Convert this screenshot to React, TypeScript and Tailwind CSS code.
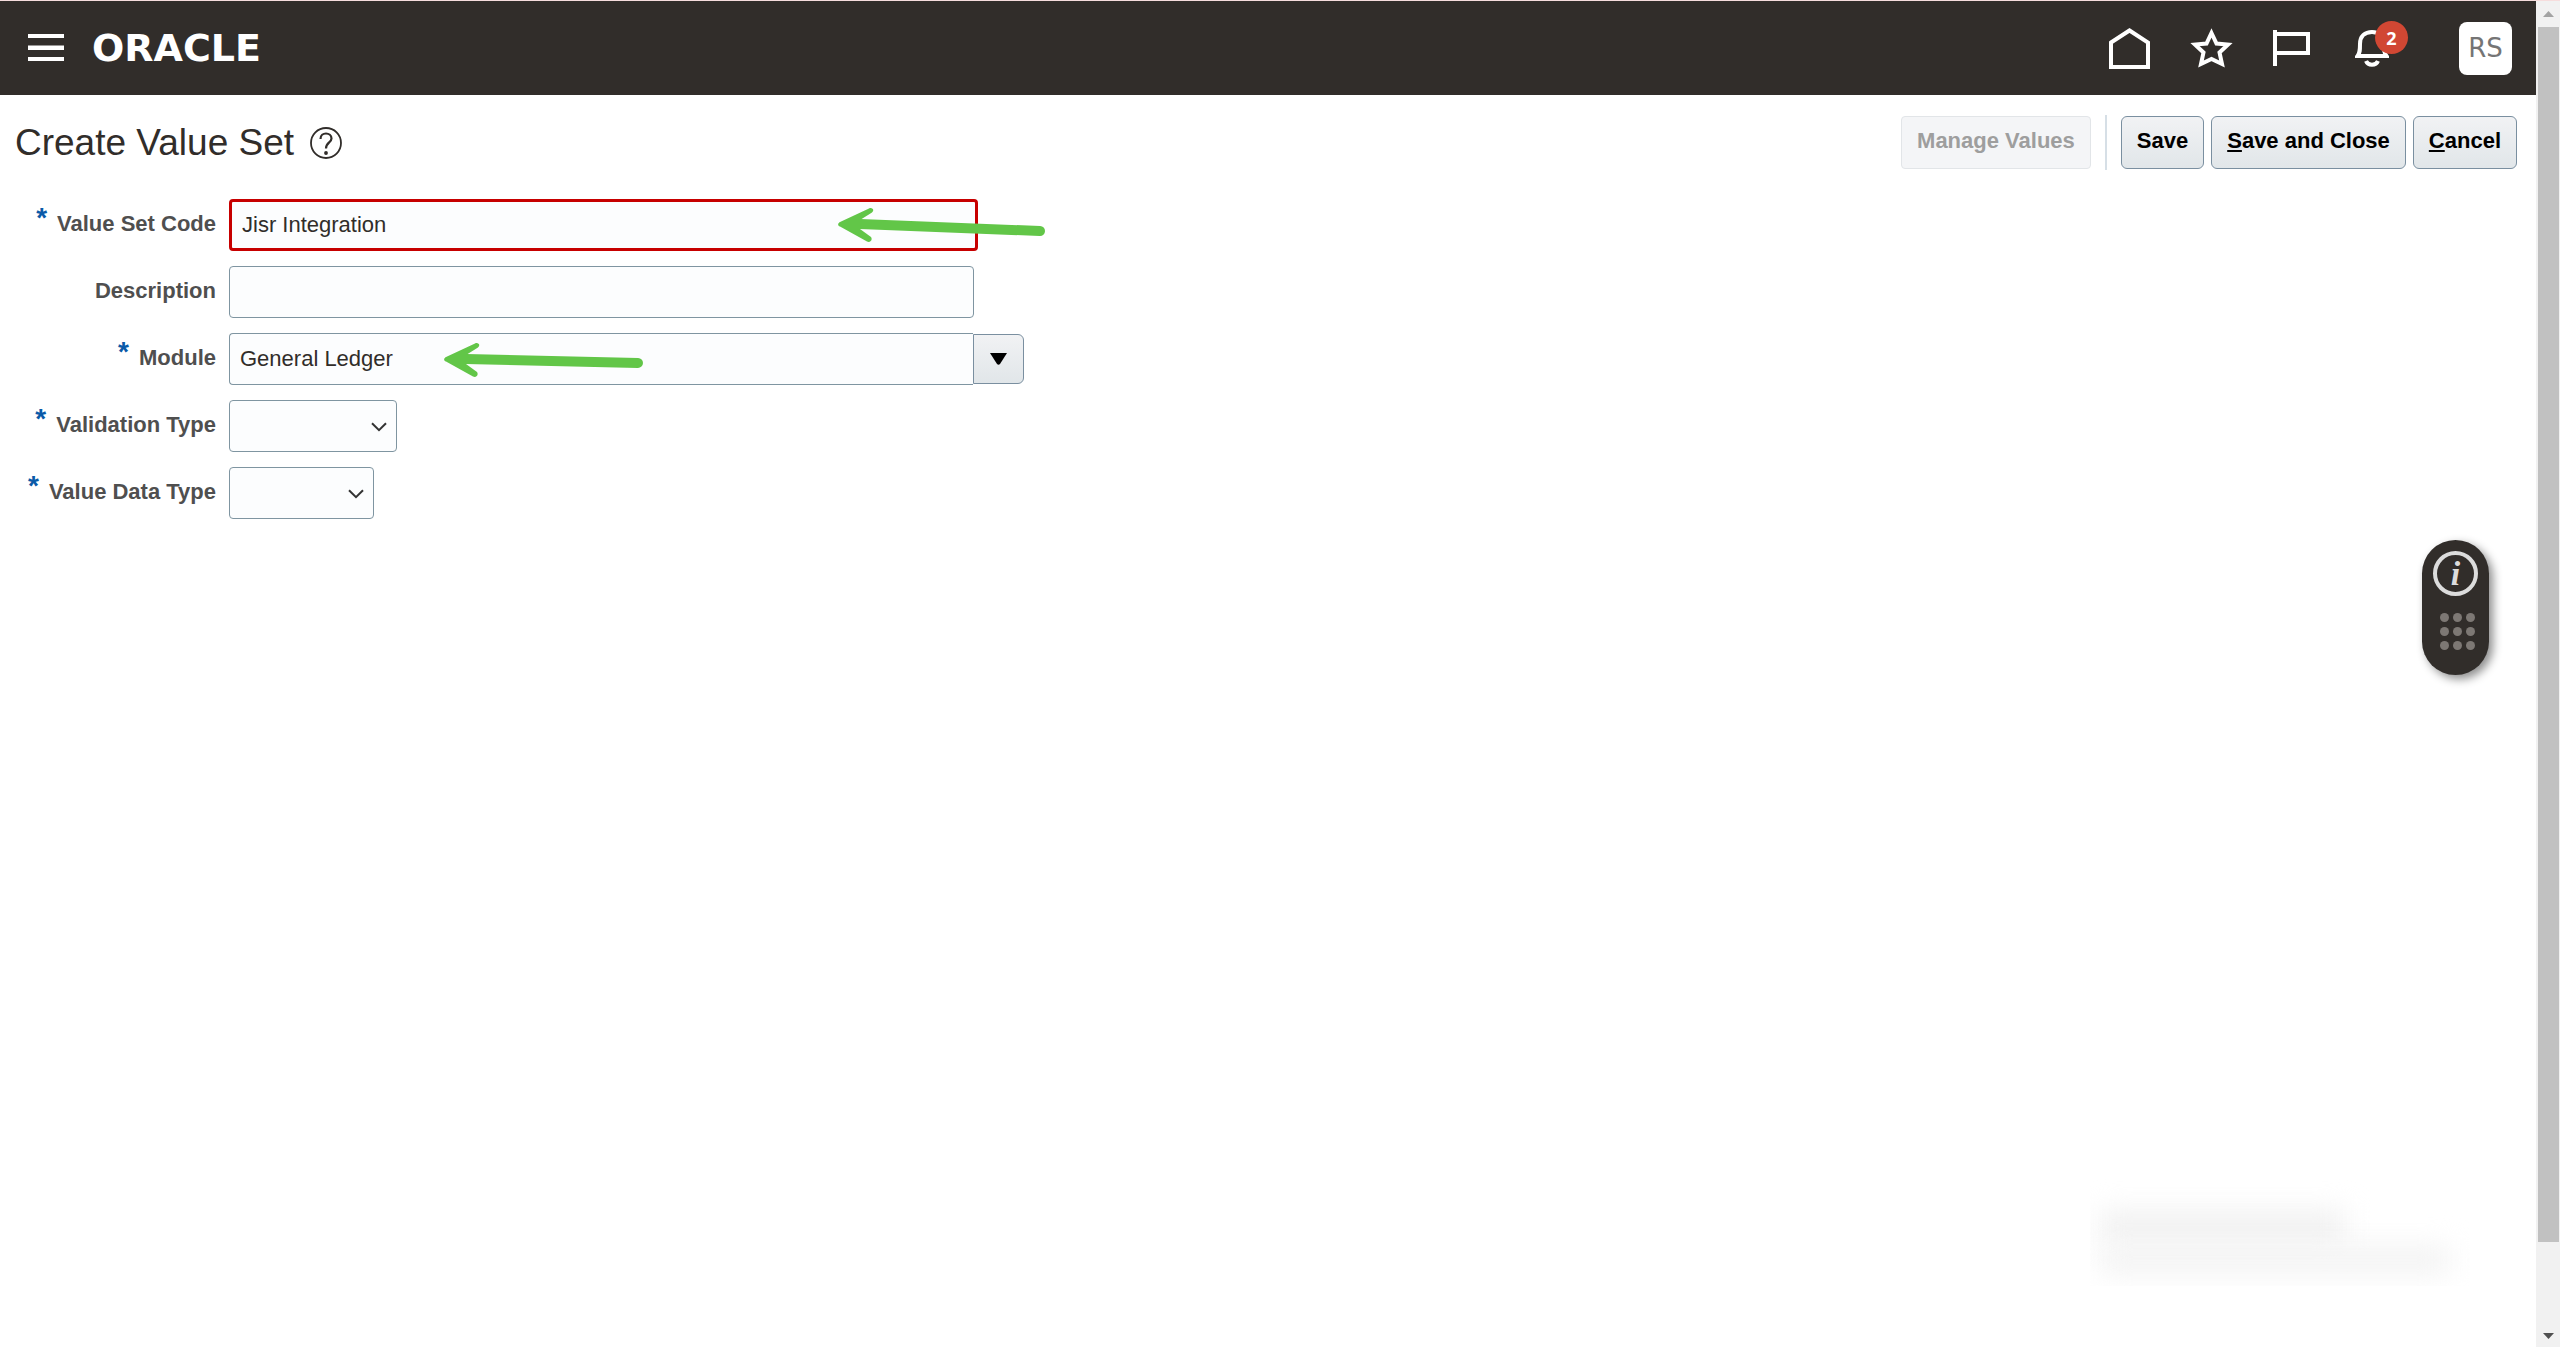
import React, { useState } from 'react';

const toolButton =
    'flex h-[53px] items-center rounded-md border border-[#7a8fa0] bg-gradient-to-b from-[#f1f2f4] to-[#e1e6e9] px-[15px] pb-1 text-[22px] font-bold text-black';

const Logo = () => (
    <a href="#" className="font-['DejaVu_Sans'] text-[38px] leading-none font-bold text-white">
        ORACLE
    </a>
);

const RequiredLabel: React.FC<{ htmlFor: string; required?: boolean; children: React.ReactNode }> = ({ htmlFor, required, children }) => (
    <label htmlFor={htmlFor} className="flex items-start justify-end gap-2.5 pb-1 font-bold text-[#4f4f4f]">
        {required && <span className="text-[28px] leading-[22px] text-[#0a5aa8]">*</span>}
        {children}
    </label>
);

const SelectBox: React.FC<{ id: string; className: string }> = ({ id, className }) => (
    <div className={`relative ${className}`}>
        <select id={id} className="block h-[52px] w-full appearance-none rounded border border-[#7f95a1] bg-[#fcfdfe] px-2.5 outline-none">
            <option value=""></option>
        </select>
        <svg className="pointer-events-none absolute top-[22px] right-2.5" width="16" height="10" viewBox="0 0 16 10" fill="none" stroke="#333" strokeWidth="2">
            <path d="M1 1.2l7 7 7-7" />
        </svg>
    </div>
);

// hand-drawn marker arrow laid over a field
const Arrow: React.FC<{ className: string; drop: number; length: number }> = ({ className, drop, length }) => (
    <svg className={`pointer-events-none absolute ${className}`} width={length} height="40" viewBox={`0 0 ${length} 40`} fill="none">
        <path d={`M22 18L${length - 5} ${19 + drop}`} stroke="#62c648" strokeWidth="10" strokeLinecap="round" />
        <path
            d="M2 16L31 2.500C34 1 37 4 34 6.500L22 14L22 23L33 31C35 34 32 37 29 35.500L2 20.500C-.5 19.500-.5 17.500 2 16Z"
            fill="#62c648"
        />
    </svg>
);

const App: React.FC = () => {
    const [code, setCode] = useState('Jisr Integration');
    const [description, setDescription] = useState('');
    const [module, setModule] = useState('General Ledger');

    return (
        <div className="flex h-screen bg-white font-['Liberation_Sans',Arial,sans-serif] text-[22px] text-[#312d2a]">
            <div className="min-w-0 flex-1">
                <header className="flex h-[95px] items-center border-t border-[#f6dddd] bg-[#312d2a] pr-6 pl-7 text-white">
                    <button type="button" aria-label="Navigator" className="mr-7">
                        <svg width="36" height="28" viewBox="0 0 36 28" fill="#fff">
                            <path d="M0 0h36v4H0zM0 11.500h36v4.500H0zM0 23h36v4H0z" />
                        </svg>
                    </button>
                    <Logo />
                    <nav className="ml-auto flex items-center gap-10">
                        <button type="button" aria-label="Home">
                            <svg width="41" height="41" viewBox="0 0 41 41" fill="none" stroke="#fff" strokeWidth="4">
                                <path d="M2 14.500L20.500 2.500 39 14.500V39H2z" />
                            </svg>
                        </button>
                        <button type="button" aria-label="Favorites">
                            <svg width="43" height="40" viewBox="0 0 43 40" fill="none" stroke="#fff" strokeWidth="4">
                                <path d="M21.500 5L26.500 15.500 38 16.500 29.500 24.500 32 36 21.500 31 11 36 13.500 24.500 5 16.500 16.500 15.500z" />
                            </svg>
                        </button>
                        <button type="button" aria-label="Watchlist">
                            <svg width="37" height="38" viewBox="0 0 37 38" fill="none" stroke="#fff" strokeWidth="4">
                                <path d="M2 1v36M2 5h33v19H2" />
                            </svg>
                        </button>
                        <button type="button" aria-label="Notifications" className="relative mr-[30px] ml-[5px]">
                            <svg width="34" height="38" viewBox="0 0 34 38" fill="none" stroke="#fff" strokeWidth="4">
                                <path d="M2.500 27C5 24 5 21 5 15 5 7 10 3 17 3S29 7 29 15C29 21 29 24 31.500 27z" />
                                <path d="M11 32c2 5 10 5 12 0" />
                            </svg>
                            <span className="absolute -top-2 -right-[19px] flex size-[33px] items-center justify-center rounded-full bg-[#d14733] font-['Open_Sans'] text-lg font-bold text-white">
                                2
                            </span>
                        </button>
                        <button type="button" aria-label="Settings and Actions" className="flex size-[53px] items-center justify-center rounded-lg bg-white font-['DejaVu_Sans'] text-[26px] text-[#757575]">
                            RS
                        </button>
                    </nav>
                </header>

                <main>
                    <div className="flex items-center pt-5 pr-[19px] pl-[15px]">
                        <h1 className="text-[37px] leading-[52px]">Create Value Set</h1>
                        <button type="button" aria-label="Help" className="ml-4">
                            <svg width="32" height="32" viewBox="0 0 32 32" fill="none" stroke="#312d2a" strokeWidth="1.800">
                                <circle cx="16" cy="16" r="15" />
                                <path d="M10.500 12C10.500 4.500 21.500 5 21.500 11.500C21.500 15.500 16 15.500 16 21.500" strokeWidth="2.200" />
                                <circle cx="16" cy="26" r="1" />
                            </svg>
                        </button>
                        <div className="ml-auto flex items-center gap-[7px]">
                            <button type="button" disabled className="flex h-[53px] items-center rounded border border-[#e2e5e8] bg-[#f4f5f7] px-[15px] pb-1 font-bold text-[#9e9e9e]">
                                Manage Values
                            </button>
                            <span className="mx-[7px] h-[55px] w-0.5 bg-[#d6dfe6]" />
                            <button type="button" className={toolButton}>Save</button>
                            <button type="button" className={toolButton}>
                                <span><span className="underline">S</span>ave and Close</span>
                            </button>
                            <button type="button" className={toolButton}>
                                <span><span className="underline">C</span>ancel</span>
                            </button>
                        </div>
                    </div>

                    <form className="mt-[29px] grid grid-cols-[216px_1fr] items-center gap-x-[13px] gap-y-[15px]">
                        <RequiredLabel htmlFor="code" required>Value Set Code</RequiredLabel>
                        <div className="relative">
                            <input
                                id="code"
                                type="text"
                                className="block h-[52px] w-[749px] rounded border-[3px] border-[#c70000] bg-[#fcfdfe] px-[10px] outline-none"
                                value={code}
                                onChange={(e) => setCode(e.target.value)}
                            />
                            <Arrow className="top-[7px] left-[609px]" drop={6} length={207} />
                        </div>

                        <RequiredLabel htmlFor="description">Description</RequiredLabel>
                        <input
                            id="description"
                            type="text"
                            className="h-[52px] w-[745px] rounded border border-[#7f95a1] bg-[#fcfdfe] px-2.5 outline-none"
                            value={description}
                            onChange={(e) => setDescription(e.target.value)}
                        />

                        <RequiredLabel htmlFor="module" required>Module</RequiredLabel>
                        <div className="relative flex items-center">
                            <input
                                id="module"
                                type="text"
                                className="h-[52px] w-[744px] rounded-l border border-r-0 border-[#7f95a1] bg-[#fcfdfe] px-2.5 outline-none"
                                value={module}
                                onChange={(e) => setModule(e.target.value)}
                            />
                            <button type="button" aria-label="Search Module" className="flex h-[50px] w-[51px] items-center justify-center rounded-r-md border border-[#7a8fa0] bg-gradient-to-b from-[#f1f2f4] to-[#e1e6e9]">
                                <svg width="17" height="12" viewBox="0 0 17 12">
                                    <path d="M0 0h17l-7 11q-1.500 1.500-3 0z" fill="#000" />
                                </svg>
                            </button>
                            <Arrow className="top-2 left-[215px]" drop={3} length={199} />
                        </div>

                        <RequiredLabel htmlFor="validation" required>Validation Type</RequiredLabel>
                        <SelectBox id="validation" className="w-[168px]" />

                        <RequiredLabel htmlFor="dataType" required>Value Data Type</RequiredLabel>
                        <SelectBox id="dataType" className="w-[145px]" />
                    </form>
                </main>
            </div>

            {/* Floating guide widget */}
            <div className="absolute top-[540px] right-[71px] flex h-[135px] w-[67px] flex-col items-center rounded-full bg-[#312d2a] pt-[11px] shadow-[4px_4px_10px_rgba(0,0,0,0.45)]">
                <button type="button" aria-label="Guide" className="flex size-[45px] items-center justify-center rounded-full border-4 border-[#dcdcdc] font-['Liberation_Serif'] text-[34px] leading-none font-bold text-[#dcdcdc] italic">
                    i
                </button>
                <div className="mt-[17px] ml-1 grid grid-cols-3 gap-x-1 gap-y-[5px]">
                    {Array.from({ length: 9 }, (_, i) => (
                        <span key={i} className="size-[9px] rounded-full bg-[#7d7874]" />
                    ))}
                </div>
            </div>

            {/* Faded watermark */}
            <div className="pointer-events-none absolute right-[90px] bottom-[61px] flex h-[110px] w-[380px] flex-col gap-2 overflow-hidden pt-9 pl-2.5">
                <div className="h-7 w-[245px] bg-[#efefef] blur-[14px]" />
                <div className="h-6 w-[350px] bg-[#f1f1f1] blur-[14px]" />
            </div>

            {/* Scroll bar */}
            <div className="flex w-6 flex-col items-center border-t border-[#f6dddd] bg-[#f1f1f1] pl-px">
                <svg className="my-2.5 shrink-0" width="11" height="6" viewBox="0 0 11 6">
                    <path d="M0 6L5.500 0 11 6z" fill="#a3a3a3" />
                </svg>
                <div className="h-[1215px] w-[21px] bg-[#c1c1c1]" />
                <svg className="mt-auto mb-2 shrink-0" width="11" height="6" viewBox="0 0 11 6">
                    <path d="M0 0L5.500 6 11 0z" fill="#505050" />
                </svg>
            </div>
        </div>
    );
};

export default App;
